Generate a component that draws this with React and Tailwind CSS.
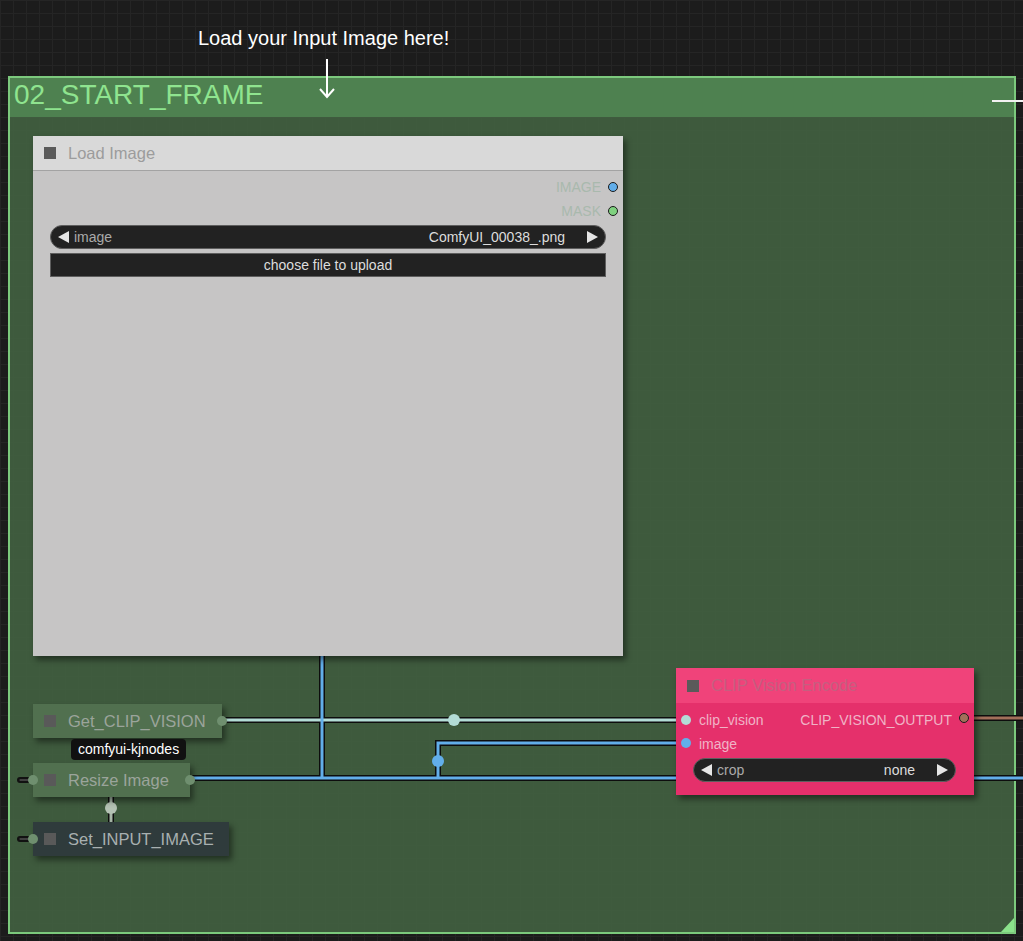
const font = "font-['Liberation_Sans',Arial,sans-serif]";

function Slot({ color, className = '' }) {
  return (
    <span
      className={`absolute w-[10px] h-[10px] rounded-full border border-[#1a1a1a] ${className}`}
      style={{ backgroundColor: color }}
    />
  );
}

function Combo({ label, value }) {
  return (
    <div className="flex items-center h-[24px] rounded-full bg-[#222] border border-[#5e5e5e] px-[7px] text-[14px]">
      <span className="w-0 h-0 border-y-[6px] border-y-transparent border-r-[11px] border-r-[#e6e6e6]" />
      <span className="ml-[5px] text-[#aaa]">{label}</span>
      <span className="ml-auto mr-[22px] text-[#ddd]">{value}</span>
      <span className="w-0 h-0 border-y-[6px] border-y-transparent border-l-[11px] border-l-[#e6e6e6]" />
    </div>
  );
}

function SmallNode({ title, left, top, width, bg, text, inputDot, outputDot }) {
  return (
    <div
      className="absolute h-[34px] flex items-center px-[11px] gap-[12px] shadow-[3px_4px_6px_rgba(0,0,0,0.45)]"
      style={{ left, top, width, backgroundColor: bg }}
    >
      <span className="w-[12px] h-[12px] bg-[#595959] shrink-0" />
      <span className="text-[16.5px]" style={{ color: text }}>{title}</span>
      {inputDot && <Slot color="#6f8f6f" className="left-[-5px] top-[12px] border-0" />}
      {outputDot && <Slot color="#6f8f6f" className="right-[-5px] top-[12px] border-0" />}
    </div>
  );
}

export default function App() {
  return (
    <div
      className={`relative w-[1023px] h-[941px] overflow-hidden bg-[#1c1c1c] bg-[linear-gradient(to_right,#252525_1px,transparent_1px),linear-gradient(to_bottom,#252525_1px,transparent_1px)] bg-[size:13px_13px] ${font}`}
    >
      {/* note above the group */}
      <div className="absolute left-[198px] top-[28px] text-[20px] text-white leading-none">
        Load your Input Image here!
      </div>

      {/* group frame */}
      <div className="absolute left-[8px] top-[76px] w-[1008px] h-[858px] border-2 border-[#7cc97d] bg-[rgba(65,96,64,0.92)] flex flex-col">
        <div className="h-[39px] bg-[#4e8150] flex items-center pl-[4px] pb-[5px] text-[28px] text-[#8fe48f] leading-none">
          02_START_FRAME
        </div>
        <div className="flex-1" />
        <div className="absolute right-0 bottom-0 w-0 h-0 border-l-[13px] border-l-transparent border-b-[14px] border-b-[#8be28b]" />
      </div>

      {/* links */}
      <svg className="absolute inset-0" width="1023" height="941">
        <g fill="none" strokeLinecap="butt">
          <path d="M322 656 V778" stroke="#0d0d0d" strokeWidth="6" />
          <path d="M190 778 H1023" stroke="#0d0d0d" strokeWidth="6" />
          <path d="M438 778 V743 H686" stroke="#0d0d0d" strokeWidth="6" />
          <path d="M222 720 H686" stroke="#0d0d0d" strokeWidth="6" />
          <path d="M964 718 H1023" stroke="#0d0d0d" strokeWidth="6" />
          <path d="M111 797 V822" stroke="#0d0d0d" strokeWidth="6" />

          <path d="M222 720 H686" stroke="#b3dcd6" strokeWidth="3" />
          <path d="M322 656 V778" stroke="#62aeea" strokeWidth="3" />
          <path d="M190 778 H1023" stroke="#62aeea" strokeWidth="3" />
          <path d="M438 778 V743 H686" stroke="#62aeea" strokeWidth="3" />
          <path d="M964 718 H1023" stroke="#a26f5a" strokeWidth="3" />
          <path d="M111 797 V822" stroke="#a9b7a9" strokeWidth="3" />

          <path d="M20 780 H33" stroke="#111" strokeWidth="6" strokeLinecap="round" />
          <path d="M20 839 H33" stroke="#111" strokeWidth="6" strokeLinecap="round" />
          <path d="M20 780 H33" stroke="#cfcfcf" strokeWidth="1" strokeLinecap="round" opacity="0.5" />
          <path d="M20 839 H33" stroke="#cfcfcf" strokeWidth="1" strokeLinecap="round" opacity="0.5" />

          <path d="M992 101 H1023" stroke="#f2f2f2" strokeWidth="2" />
        </g>
        <circle cx="454" cy="720" r="6" fill="#b3dcd6" />
        <circle cx="438" cy="761" r="6" fill="#62aeea" />
        <circle cx="111" cy="808" r="6" fill="#b4c2b4" />
      </svg>

      {/* Load Image */}
      <div className="absolute left-[33px] top-[136px] w-[590px] h-[520px] bg-[#c6c5c5] shadow-[3px_4px_6px_rgba(0,0,0,0.45)] flex flex-col">
        <div className="h-[35px] bg-[#d9d9d9] border-b border-[#a3a3a3] flex items-center px-[11px] gap-[12px]">
          <span className="w-[12px] h-[12px] bg-[#5a5a5a]" />
          <span className="text-[16.5px] text-[#9c9c9c]">Load Image</span>
        </div>
        <div className="relative flex flex-col pt-[4px]">
          <div className="relative h-[24px] flex items-center justify-end pr-[22px] text-[14px] text-[#a9b9ad]">
            IMAGE
            <Slot color="#62aeea" className="right-[5px] top-[7px]" />
          </div>
          <div className="relative h-[24px] flex items-center justify-end pr-[22px] text-[14px] text-[#a9b9ad]">
            MASK
            <Slot color="#7fd17f" className="right-[5px] top-[7px]" />
          </div>
          <div className="mx-[17px] mt-[2px] flex flex-col gap-[4px]">
            <Combo label="image" value="ComfyUI_00038_.png" />
            <div className="h-[24px] bg-[#222] border border-[#5e5e5e] flex items-center justify-center text-[14px] text-[#ddd]">
              choose file to upload
            </div>
          </div>
        </div>
      </div>

      {/* kjnodes helpers */}
      <SmallNode title="Get_CLIP_VISION" left={33} top={704} width={189} bg="#51704f" text="#9ba49b" outputDot />
      <div className="absolute left-[71px] top-[739px] px-[7px] h-[21px] rounded-[4px] bg-[#111] flex items-center text-[14px] text-white">
        comfyui-kjnodes
      </div>
      <SmallNode title="Resize Image" left={33} top={763} width={157} bg="#51704f" text="#9ba49b" inputDot outputDot />
      <SmallNode title="Set_INPUT_IMAGE" left={33} top={822} width={196} bg="#2f3b3c" text="#a8b0b0" inputDot />

      {/* CLIP Vision Encode */}
      <div className="absolute left-[676px] top-[668px] w-[298px] h-[127px] bg-[#e5306b] shadow-[3px_4px_6px_rgba(0,0,0,0.45)] flex flex-col">
        <div className="h-[35px] bg-[#f0437a] flex items-center px-[11px] gap-[12px]">
          <span className="w-[12px] h-[12px] bg-[#5a5a5a]" />
          <span className="text-[16.5px] text-[#c55f80]">CLIP Vision Encode</span>
        </div>
        <div className="relative pt-[5px] text-[14px] text-[#f0b3c6]">
          <div className="relative h-[24px] flex items-center pl-[23px]">
            clip_vision
            <span className="ml-auto mr-[22px]">CLIP_VISION_OUTPUT</span>
            <Slot color="#b3dcd6" className="left-[5px] top-[7px] border-0" />
            <Slot color="#a26f5a" className="right-[5px] top-[5px]" />
          </div>
          <div className="relative h-[24px] flex items-center pl-[23px]">
            image
            <Slot color="#62aeea" className="left-[5px] top-[6px] border-0" />
          </div>
          <div className="ml-[17px] mr-[18px] mt-[2px]">
            <Combo label="crop" value="none" />
          </div>
        </div>
      </div>

      {/* arrow from the note */}
      <svg className="absolute left-[317px] top-[58px]" width="20" height="42">
        <path d="M10 1 V39 M3 31 L10 39 L17 31" fill="none" stroke="#fff" strokeWidth="2" />
      </svg>
    </div>
  );
}
